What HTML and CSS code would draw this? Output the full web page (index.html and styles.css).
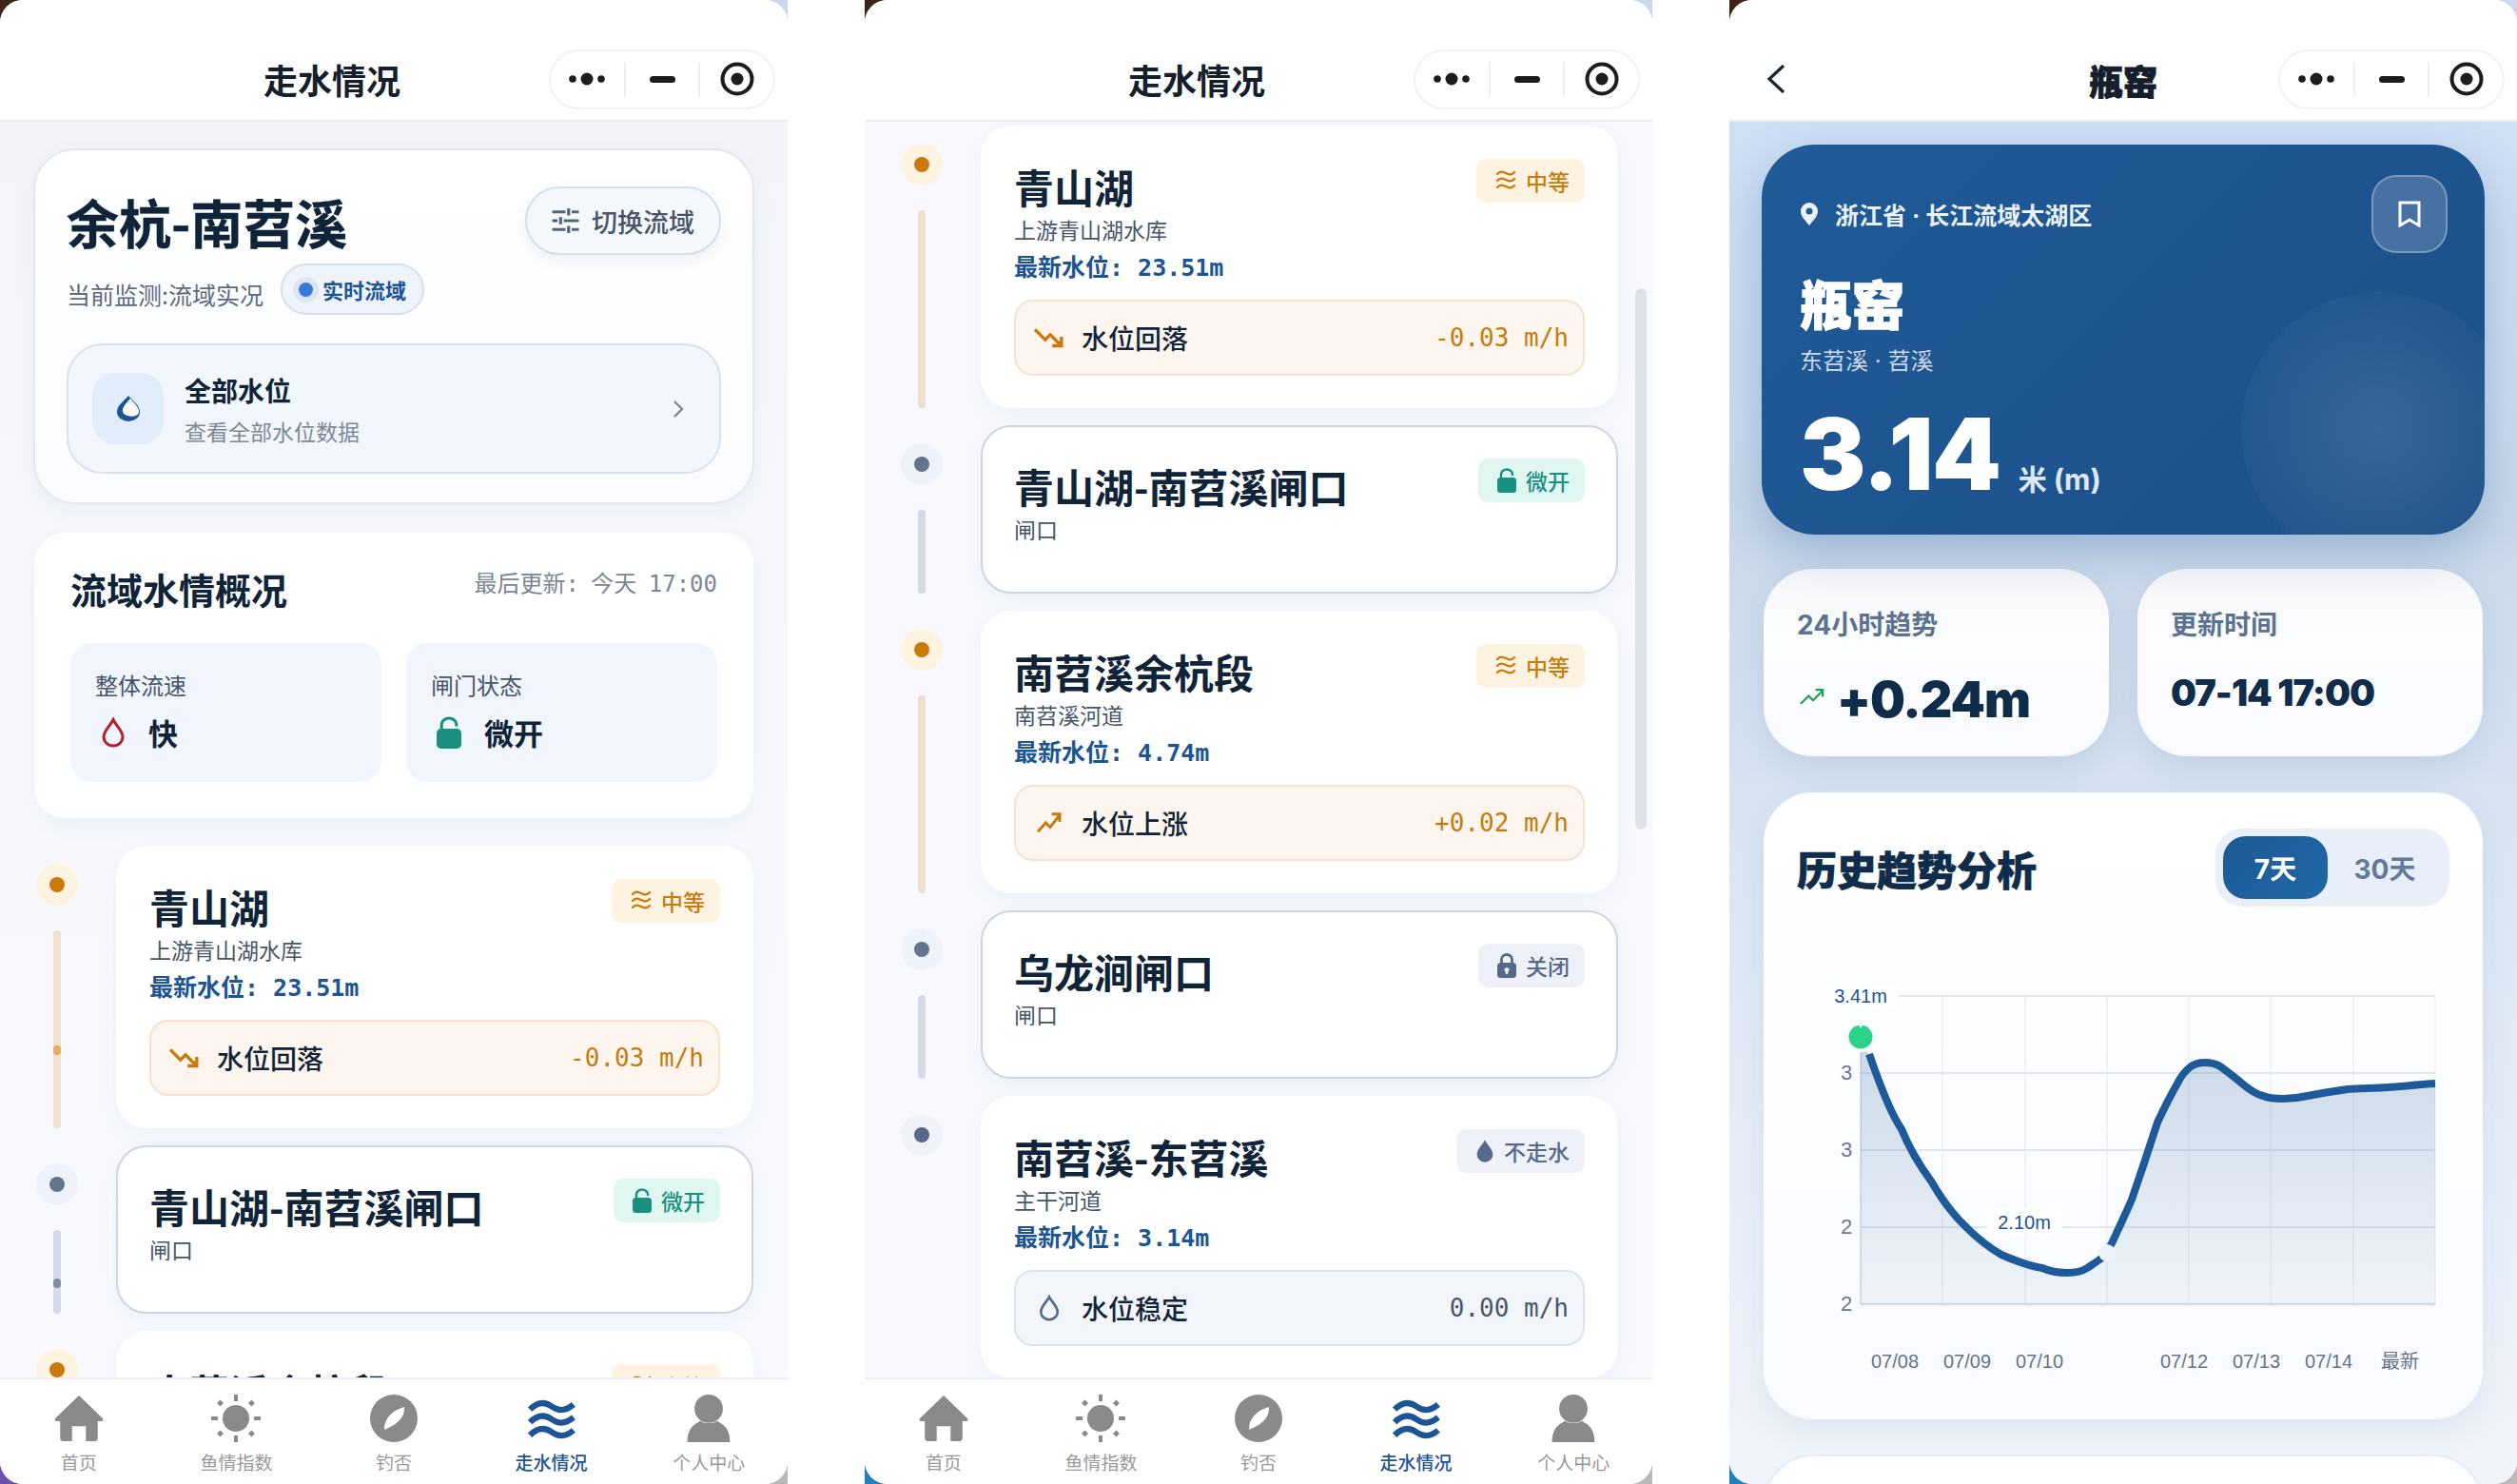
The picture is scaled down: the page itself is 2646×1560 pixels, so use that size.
FILE: index.html
```html
<!DOCTYPE html>
<html lang="zh-CN">
<head>
    <meta charset="UTF-8">
    <title>走水情况</title>
    <link rel="stylesheet" href="styles.css">
</head>
<body>
    <svg class="defs" width="0" height="0">
        <symbol id="i-dots" viewBox="0 0 38 14"><circle cx="4" cy="7" r="3.8"/><circle cx="19" cy="7" r="6.5"/><circle cx="34" cy="7" r="3.8"/></symbol>
        <symbol id="i-target" viewBox="0 0 36 36"><circle cx="18" cy="18" r="15.5" fill="none" stroke="currentColor" stroke-width="4"/><circle cx="18" cy="18" r="6.5"/></symbol>
        <symbol id="i-wave3" viewBox="0 0 22 24"><path d="M2 5c3-3 5-3 9-1s6 2 9-1M2 12c3-3 5-3 9-1s6 2 9-1M2 19c3-3 5-3 9-1s6 2 9-1" fill="none" stroke="currentColor" stroke-width="2.400" stroke-linecap="round"/></symbol>
        <symbol id="i-lock-open" viewBox="0 0 20 26"><rect x="0" y="10" width="20" height="16" rx="3.5"/><path d="M4 11V6.500a6 5 0 0 1 12 0V8" fill="none" stroke="currentColor" stroke-width="2.400"/></symbol>
        <symbol id="i-lock" viewBox="0 0 20 26"><path fill-rule="evenodd" d="M3.500 10h13a3.500 3.500 0 0 1 3.500 3.500v9a3.500 3.500 0 0 1-3.500 3.500h-13A3.500 3.500 0 0 1 0 22.500v-9A3.500 3.500 0 0 1 3.500 10zM10 15a2.500 2.500 0 0 0-1.200 4.700V22h2.400v-2.300A2.500 2.500 0 0 0 10 15z"/><path d="M4.500 11V6.500a5.500 5 0 0 1 11 0V11" fill="none" stroke="currentColor" stroke-width="2.800"/></symbol>
        <symbol id="i-drop" viewBox="0 0 24 30"><path d="M12 1C9 7 2 13 2 19.500a10 9.500 0 0 0 20 0C22 13 15 7 12 1z"/></symbol>
        <symbol id="i-drop-line" viewBox="0 0 26 32"><path d="M13 2.500C10 9 3 14 3 20.500a10 9.500 0 0 0 20 0C23 14 16 9 13 2.500z" fill="none" stroke="currentColor" stroke-width="3"/></symbol>
        <symbol id="i-down" viewBox="0 0 30 20"><path d="M1 2l10 10 5-5 11 11M27 9v9h-9" fill="none" stroke="currentColor" stroke-width="3.200"/></symbol>
        <symbol id="i-up" viewBox="0 0 28 24"><path d="M1 22L10 12l5 5L26 3M17 2h9v9" fill="none" stroke="currentColor" stroke-width="3.200"/></symbol>
        <symbol id="i-home" viewBox="0 0 50 46"><path d="M25 0l24 23c1 2 0 3-2 3h-3v17c0 2-1 3-3 3h-9V31H18v15H9c-2 0-3-1-3-3V26H3c-2 0-3-1-2-3z"/></symbol>
        <symbol id="i-sun" viewBox="0 0 52 50"><circle cx="26" cy="25" r="14"/><rect x="24" y="0" width="4" height="7"/><rect x="24" y="43" width="4" height="7"/><rect x="0" y="23" width="7" height="4"/><rect x="45" y="23" width="7" height="4"/><rect x="7" y="6.500" width="5" height="5" transform="rotate(45 9.500 9)"/><rect x="40" y="6.500" width="5" height="5" transform="rotate(45 42.500 9)"/><rect x="7" y="38.500" width="5" height="5" transform="rotate(45 9.500 41)"/><rect x="40" y="38.500" width="5" height="5" transform="rotate(45 42.500 41)"/></symbol>
        <symbol id="i-compass" viewBox="0 0 46 46"><circle cx="23" cy="23" r="23"/><path d="M33 12c1 8-4 16-19 22-1-8 5-18 19-22z" fill="#fff"/></symbol>
        <symbol id="i-waves" viewBox="0 0 50 40"><path d="M3 11C11 3 18 3 25 8s14 5 22-2M3 24c8-8 15-8 22-3s14 5 22-2M3 37c8-8 15-8 22-3s14 5 22-2" fill="none" stroke="currentColor" stroke-width="6"/></symbol>
        <symbol id="i-user" viewBox="0 0 42 47"><ellipse cx="21" cy="14" rx="14" ry="14"/><path d="M13 26c2 3 14 3 16 0 6 3 13 7 13 21H0C0 33 7 29 13 26z"/></symbol>
    </svg>

    <div class="desk">

        <!-- 走水情况 -->
        <div class="frame frame-a">
            <div class="screen">
                <div class="navbar">
                    <div class="nav-title">走水情况</div>
                    <div class="capsule">
                        <span class="cap-cell"><svg class="ic-dots"><use href="#i-dots"/></svg></span>
                        <span class="cap-cell"><i class="cap-dash"></i></span>
                        <span class="cap-cell"><svg class="ic-target"><use href="#i-target"/></svg></span>
                    </div>
                </div>
                <div class="content">
                    <div class="basin-card">
                        <div class="basin-head">
                            <div>
                                <h1 class="basin-name">余杭-南苕溪</h1>
                                <div class="basin-sub">
                                    <span class="basin-note">当前监测:流域实况</span>
                                    <span class="live-pill"><i class="live-dot"></i>实时流域</span>
                                </div>
                            </div>
                            <div class="switch-btn">
                                <svg class="ic-tune" viewBox="0 0 30 28"><path d="M0 4h15M22 4h8M0 14h6M13 14h17M0 24h15M22 24h8M18.500 0v8M9.500 10v8M18.500 20v8" fill="none" stroke="#56647a" stroke-width="3.400"/></svg>
                                切换流域
                            </div>
                        </div>
                        <div class="all-row">
                            <div class="all-icon">
                                <svg class="ic-alldrop" viewBox="0 0 24 27"><path d="M12 0C8 5 0 10 0 17a12 10 0 0 0 24 0C24 10 16 5 12 0z" fill="#1c5596"/><path d="M14 3c-2 3-9 8-8 14 2 5 14 7 17 1 1-6-6-11-9-15z" fill="#fff"/></svg>
                            </div>
                            <div class="all-text">
                                <div class="all-title">全部水位</div>
                                <div class="all-desc">查看全部水位数据</div>
                            </div>
                            <svg class="ic-chev" viewBox="0 0 12 20"><path d="M2 2l8 8-8 8" fill="none" stroke="#7b8594" stroke-width="2.400"/></svg>
                        </div>
                    </div>

                    <div class="overview">
                        <div class="overview-head">
                            <h2 class="overview-title">流域水情概况</h2>
                            <span class="overview-time">最后更新: 今天 17:00</span>
                        </div>
                        <div class="overview-grid">
                            <div class="stat">
                                <div class="stat-label">整体流速</div>
                                <div class="stat-value"><svg class="ic-stat red"><use href="#i-drop-line"/></svg>快</div>
                            </div>
                            <div class="stat">
                                <div class="stat-label">闸门状态</div>
                                <div class="stat-value"><svg class="ic-stat teal"><use href="#i-lock-open"/></svg>微开</div>
                            </div>
                        </div>
                    </div>

                    <div class="timeline">
                        <div class="tl-row">
                            <div class="tl-side amber"><i class="tl-dot"></i><i class="tl-line blip"></i></div>
                            <div class="item">
                                <div class="item-head">
                                    <div class="item-title">青山湖</div>
                                    <span class="badge amber"><svg class="ic-badge"><use href="#i-wave3"/></svg>中等</span>
                                </div>
                                <div class="item-loc">上游青山湖水库</div>
                                <div class="item-level">最新水位: 23.51m</div>
                                <div class="trend amber">
                                    <svg class="ic-trend"><use href="#i-down"/></svg>
                                    <span class="trend-name">水位回落</span>
                                    <span class="trend-val">-0.03 m/h</span>
                                </div>
                            </div>
                        </div>
                        <div class="tl-row">
                            <div class="tl-side gate"><i class="tl-dot"></i><i class="tl-line blip"></i></div>
                            <div class="item item-gate">
                                <div class="item-head">
                                    <div class="item-title">青山湖-南苕溪闸口</div>
                                    <span class="badge teal"><svg class="ic-badge ic-lock"><use href="#i-lock-open"/></svg>微开</span>
                                </div>
                                <div class="item-loc">闸口</div>
                            </div>
                        </div>
                        <div class="tl-row">
                            <div class="tl-side amber"><i class="tl-dot"></i><i class="tl-line"></i></div>
                            <div class="item">
                                <div class="item-head">
                                    <div class="item-title">南苕溪余杭段</div>
                                    <span class="badge amber"><svg class="ic-badge"><use href="#i-wave3"/></svg>中等</span>
                                </div>
                            </div>
                        </div>
                    </div>
                </div>
                <div class="tabbar">
                    <div class="tab"><svg class="ic-tab"><use href="#i-home"/></svg>首页</div>
                    <div class="tab"><svg class="ic-tab"><use href="#i-sun"/></svg>鱼情指数</div>
                    <div class="tab"><svg class="ic-tab"><use href="#i-compass"/></svg>钓否</div>
                    <div class="tab active"><svg class="ic-tab"><use href="#i-waves"/></svg>走水情况</div>
                    <div class="tab"><svg class="ic-tab"><use href="#i-user"/></svg>个人中心</div>
                </div>
            </div>
        </div>

        <!-- 走水情况，列表滚动后 -->
        <div class="frame frame-b">
            <div class="screen">
                <div class="navbar">
                    <div class="nav-title">走水情况</div>
                    <div class="capsule">
                        <span class="cap-cell"><svg class="ic-dots"><use href="#i-dots"/></svg></span>
                        <span class="cap-cell"><i class="cap-dash"></i></span>
                        <span class="cap-cell"><svg class="ic-target"><use href="#i-target"/></svg></span>
                    </div>
                </div>
                <div class="content content-scrolled">
                    <div class="timeline">
                        <div class="tl-row">
                            <div class="tl-side amber"><i class="tl-dot"></i><i class="tl-line"></i></div>
                            <div class="item">
                                <div class="item-head">
                                    <div class="item-title">青山湖</div>
                                    <span class="badge amber"><svg class="ic-badge"><use href="#i-wave3"/></svg>中等</span>
                                </div>
                                <div class="item-loc">上游青山湖水库</div>
                                <div class="item-level">最新水位: 23.51m</div>
                                <div class="trend amber">
                                    <svg class="ic-trend"><use href="#i-down"/></svg>
                                    <span class="trend-name">水位回落</span>
                                    <span class="trend-val">-0.03 m/h</span>
                                </div>
                            </div>
                        </div>
                        <div class="tl-row">
                            <div class="tl-side gate"><i class="tl-dot"></i><i class="tl-line"></i></div>
                            <div class="item item-gate">
                                <div class="item-head">
                                    <div class="item-title">青山湖-南苕溪闸口</div>
                                    <span class="badge teal"><svg class="ic-badge ic-lock"><use href="#i-lock-open"/></svg>微开</span>
                                </div>
                                <div class="item-loc">闸口</div>
                            </div>
                        </div>
                        <div class="tl-row">
                            <div class="tl-side amber"><i class="tl-dot"></i><i class="tl-line"></i></div>
                            <div class="item">
                                <div class="item-head">
                                    <div class="item-title">南苕溪余杭段</div>
                                    <span class="badge amber"><svg class="ic-badge"><use href="#i-wave3"/></svg>中等</span>
                                </div>
                                <div class="item-loc">南苕溪河道</div>
                                <div class="item-level">最新水位: 4.74m</div>
                                <div class="trend amber">
                                    <svg class="ic-trend"><use href="#i-up"/></svg>
                                    <span class="trend-name">水位上涨</span>
                                    <span class="trend-val">+0.02 m/h</span>
                                </div>
                            </div>
                        </div>
                        <div class="tl-row">
                            <div class="tl-side gate"><i class="tl-dot"></i><i class="tl-line"></i></div>
                            <div class="item item-gate">
                                <div class="item-head">
                                    <div class="item-title">乌龙涧闸口</div>
                                    <span class="badge slate"><svg class="ic-badge ic-lock"><use href="#i-lock"/></svg>关闭</span>
                                </div>
                                <div class="item-loc">闸口</div>
                            </div>
                        </div>
                        <div class="tl-row">
                            <div class="tl-side slate"><i class="tl-dot"></i></div>
                            <div class="item">
                                <div class="item-head">
                                    <div class="item-title">南苕溪-东苕溪</div>
                                    <span class="badge slate"><svg class="ic-badge ic-lock"><use href="#i-drop"/></svg>不走水</span>
                                </div>
                                <div class="item-loc">主干河道</div>
                                <div class="item-level">最新水位: 3.14m</div>
                                <div class="trend slate">
                                    <svg class="ic-trend ic-trend-drop"><use href="#i-drop-line"/></svg>
                                    <span class="trend-name">水位稳定</span>
                                    <span class="trend-val">0.00 m/h</span>
                                </div>
                            </div>
                        </div>
                    </div>
                    <i class="scrollbar"></i>
                </div>
                <div class="tabbar">
                    <div class="tab"><svg class="ic-tab"><use href="#i-home"/></svg>首页</div>
                    <div class="tab"><svg class="ic-tab"><use href="#i-sun"/></svg>鱼情指数</div>
                    <div class="tab"><svg class="ic-tab"><use href="#i-compass"/></svg>钓否</div>
                    <div class="tab active"><svg class="ic-tab"><use href="#i-waves"/></svg>走水情况</div>
                    <div class="tab"><svg class="ic-tab"><use href="#i-user"/></svg>个人中心</div>
                </div>
            </div>
        </div>

        <!-- 瓶窑详情 -->
        <div class="frame frame-b">
            <div class="screen">
                <div class="navbar navbar-detail">
                    <svg class="ic-back" viewBox="0 0 20 32"><path d="M18 2L3 16l15 14" fill="none" stroke="#1a2433" stroke-width="3.200"/></svg>
                    <div class="nav-title">瓶窑</div>
                    <div class="capsule">
                        <span class="cap-cell"><svg class="ic-dots"><use href="#i-dots"/></svg></span>
                        <span class="cap-cell"><i class="cap-dash"></i></span>
                        <span class="cap-cell"><svg class="ic-target"><use href="#i-target"/></svg></span>
                    </div>
                </div>
                <div class="content detail">
                    <div class="hero">
                        <i class="hero-glow"></i>
                        <div class="hero-top">
                            <div class="hero-place">
                                <svg class="ic-pin" viewBox="0 0 20 24"><path fill-rule="evenodd" d="M10 0a9 9 0 0 1 9 9c0 6-6 11-9 15-3-4-9-9-9-15a9 9 0 0 1 9-9zm0 5.500a3.500 3.500 0 1 0 0 7 3.500 3.500 0 0 0 0-7z" fill="#eaf1f8"/></svg>
                                浙江省 · 长江流域太湖区
                            </div>
                            <div class="hero-mark">
                                <svg class="ic-mark" viewBox="0 0 24 28"><path d="M2 2h20v24l-10-6-10 6z" fill="none" stroke="#fff" stroke-width="3"/></svg>
                            </div>
                        </div>
                        <h1 class="hero-name">瓶窑</h1>
                        <div class="hero-river">东苕溪 · 苕溪</div>
                        <div class="hero-level">
                            <span class="hero-num">3.14</span>
                            <span class="hero-unit">米 (m)</span>
                        </div>
                    </div>

                    <div class="mini-grid">
                        <div class="mini">
                            <div class="mini-label">24小时趋势</div>
                            <div class="mini-value mini-big"><svg class="ic-mini" viewBox="0 0 28 18"><path d="M1 17l9-9 5 5L26 2M18 1h8v8" fill="none" stroke="#1fa055" stroke-width="2.400"/></svg>+0.24m</div>
                        </div>
                        <div class="mini">
                            <div class="mini-label">更新时间</div>
                            <div class="mini-value">07-14 17:00</div>
                        </div>
                    </div>

                    <div class="history">
                        <div class="history-head">
                            <h2 class="history-title">历史趋势分析</h2>
                            <div class="range">
                                <span class="range-btn on">7天</span>
                                <span class="range-btn">30天</span>
                            </div>
                        </div>
                        <svg class="chart" viewBox="0 0 756 492">
                            <defs>
                                <linearGradient id="areaFill" x1="0" y1="0" x2="0" y2="1">
                                    <stop offset="0" stop-color="#1e5a96" stop-opacity=".22"/>
                                    <stop offset="1" stop-color="#1e5a96" stop-opacity=".05"/>
                                </linearGradient>
                            </defs>
                            <g stroke="#eaeff6" stroke-width="1.500">
                                <path d="M188 47v324M275 47v324M361 47v324M447 47v324M533 47v324M620 47v324M706 47v324"/>
                            </g>
                            <g stroke="#e0e7f1" stroke-width="2">
                                <path d="M142 47h564M102 128h604M102 209h604M102 290h604"/>
                            </g>
                            <path d="M102 371h604" stroke="#d3deed" stroke-width="2.500"/>
                            <path d="M102 100v271" stroke="#cdd8e8" stroke-width="1.500"/>
                            <path class="area" fill="url(#areaFill)" d="M102 100L111 108C122 140 133 170 145 187C155 212 166 228 177 243C188 262 200 278 214 291C226 303 238 312 250 319C264 325 279 331 293 333C302 337 310 338 319 338C327 338 334 337 340 333C346 329 351 326 356 322C360 316 363 312 366 307C373 292 380 277 387 261C396 235 405 208 414 180C421 165 428 151 435 139C439 131 443 126 448 122C453 118 458 117 464 117C470 117 475 118 480 121C488 127 495 132 503 139C510 145 517 150 525 152C532 155 539 155 546 155C555 155 563 154 572 152C586 149 600 147 614 145C628 144 642 144 656 143C673 142 689 140 706 139V371H102z"/>
                            <path class="curve" d="M111 108C122 140 133 170 145 187C155 212 166 228 177 243C188 262 200 278 214 291C226 303 238 312 250 319C264 325 279 331 293 333C302 337 310 338 319 338C327 338 334 337 340 333C346 329 351 326 356 322C360 316 363 312 366 307C373 292 380 277 387 261C396 235 405 208 414 180C421 165 428 151 435 139C439 131 443 126 448 122C453 118 458 117 464 117C470 117 475 118 480 121C488 127 495 132 503 139C510 145 517 150 525 152C532 155 539 155 546 155C555 155 563 154 572 152C586 149 600 147 614 145C628 144 642 144 656 143C673 142 689 140 706 139"/>
                            <circle cx="361" cy="317" r="9" fill="#eef3fb"/>
                            <circle cx="102" cy="90" r="16" fill="#fff"/>
                            <circle cx="102" cy="90" r="12.500" fill="#2bd48a"/>
                            <path d="M99 76l3 5 3-5z" fill="#fff"/>
                            <rect x="64" y="36" width="76" height="24" fill="#fff"/>
                            <text class="peak" x="102" y="54">3.41m</text>
                            <rect x="235" y="270" width="79" height="27" rx="6" fill="#fff"/>
                            <text class="peak low" x="274" y="292">2.10m</text>
                            <text class="axis-y" x="87" y="135">3</text>
                            <text class="axis-y" x="87" y="216">3</text>
                            <text class="axis-y" x="87" y="297">2</text>
                            <text class="axis-y" x="87" y="378">2</text>
                            <text class="axis-x" x="138" y="438">07/08</text>
                            <text class="axis-x" x="214" y="438">07/09</text>
                            <text class="axis-x" x="290" y="438">07/10</text>
                            <text class="axis-x" x="442" y="438">07/12</text>
                            <text class="axis-x" x="518" y="438">07/13</text>
                            <text class="axis-x" x="594" y="438">07/14</text>
                            <text class="axis-x" x="669" y="438">最新</text>
                        </svg>
                    </div>
                    <div class="next-card"></div>
                </div>
            </div>
        </div>

    </div>
</body>
</html>
```

FILE: styles.css
```css
body, html {
    margin: 0;
    padding: 0;
    background: #fff;
    font-family: "Noto Sans CJK SC", "Noto Sans", sans-serif;
    color: #0f2438;
}
.defs {
    position: absolute;
}
.desk {
    display: flex;
    gap: 81px;
    width: 2646px;
    height: 1560px;
    overflow: hidden;
}
.frame {
    width: 828px;
    height: 1560px;
    flex: none;
}
/* esquinas del fondo de escritorio */
.frame-a {
    background: conic-gradient(#cdd8ef 0 25%, #b9b9b9 0 50%, #6a4fb0 0 75%, #3d2414 0);
}
.frame-b {
    background: conic-gradient(#cdd8ef 0 25%, #b9b9b9 0 50%, #1f7fc0 0 75%, #3d2414 0);
}
.screen {
    height: 100%;
    border-radius: 24px;
    overflow: hidden;
    display: flex;
    flex-direction: column;
    background: #fff;
}

/* navbar */
.navbar {
    height: 128px;
    flex: none;
    box-sizing: border-box;
    border-bottom: 2px solid #ececf0;
    display: flex;
    align-items: center;
    padding: 40px 13px 0 0;
    position: relative;
    z-index: 3;
    background: #fff;
}
.nav-title {
    flex: 1;
    text-align: center;
    font-size: 36px;
    font-weight: 700;
    color: #141e2c;
    padding-left: 121px;
}
.navbar-detail .nav-title {
    position: absolute;
    left: 0;
    right: 0;
    top: 60px;
    padding-left: 0;
    line-height: 48px;
    font-weight: 900;
    -webkit-text-stroke: 1px #141e2c;
}
.ic-back {
    width: 20px;
    height: 32px;
    margin-left: 39px;
    margin-right: auto;
}
.capsule {
    width: 238px;
    height: 63px;
    box-sizing: border-box;
    border: 2px solid #f2f2f4;
    border-radius: 32px;
    display: flex;
    align-items: center;
    color: #1c1c1e;
    fill: currentColor;
    background: #fff;
}
.cap-cell {
    flex: 1;
    height: 37px;
    display: flex;
    align-items: center;
    justify-content: center;
    border-left: 2px solid #efefef;
}
.cap-cell:first-child {
    border-left: 0;
}
.ic-dots {
    width: 38px;
    height: 14px;
}
.cap-dash {
    display: block;
    width: 27px;
    height: 7px;
    border-radius: 4px;
    background: #1c1c1e;
}
.ic-target {
    width: 36px;
    height: 36px;
}

/* contenido */
.content {
    flex: 1;
    min-height: 0;
    overflow: hidden;
    position: relative;
    box-sizing: border-box;
    padding: 28px 36px 0;
    background: linear-gradient(#f2f4f9 0, #f5f7fc 30%, #f8faff 100%);
}
.content-scrolled {
    padding-top: 4px;
    background: #f7f9fe;
}
.scrollbar {
    position: absolute;
    right: 6px;
    top: 175px;
    width: 12px;
    height: 569px;
    border-radius: 6px;
    background: #dde1e8;
}

.basin-card {
    height: 374px;
    box-sizing: border-box;
    margin: 0 -1px;
    border: 2px solid #e1e8f2;
    border-radius: 44px;
    padding: 38px 33px 0;
    background: linear-gradient(#fff, #fafcff);
    box-shadow: 0 8px 24px rgba(40, 70, 120, .05);
}
.basin-head {
    display: flex;
    justify-content: space-between;
    align-items: flex-start;
}
.basin-name {
    margin: 0;
    font-size: 55px;
    line-height: 72px;
    font-weight: 700;
    color: #0f2438;
    -webkit-text-stroke: .4px #0f2438;
}
.basin-sub {
    display: flex;
    align-items: center;
    gap: 18px;
    margin-top: 9px;
}
.basin-note {
    font-size: 25px;
    color: #5d6b7e;
    padding-top: 10px;
}
.live-pill {
    height: 54px;
    box-sizing: border-box;
    padding: 0 17px 0 13px;
    display: flex;
    align-items: center;
    gap: 10px;
    border: 2px solid #d6dfec;
    border-radius: 27px;
    background: #eef3fc;
    font-size: 22px;
    font-weight: 700;
    color: #1c5596;
}
.live-dot {
    width: 15px;
    height: 15px;
    border-radius: 50%;
    background: #3a78d8;
    box-shadow: 0 0 0 6px #dce6f6;
    margin-left: 4px;
}
.switch-btn {
    width: 206px;
    height: 72px;
    box-sizing: border-box;
    border: 2px solid #d6dfec;
    border-radius: 36px;
    background: #f5f8fd;
    box-shadow: 0 6px 16px rgba(40, 70, 120, .08);
    display: flex;
    align-items: center;
    justify-content: center;
    gap: 13px;
    font-size: 27px;
    font-weight: 500;
    color: #475569;
}
.ic-tune {
    width: 29px;
    height: 26px;
}
.all-row {
    height: 137px;
    box-sizing: border-box;
    margin-top: 30px;
    border: 2px solid #d8e1ed;
    border-radius: 38px;
    background: #f2f7fe;
    display: flex;
    align-items: center;
    padding: 0 37px 0 25px;
}
.all-icon {
    width: 75px;
    height: 75px;
    border-radius: 24px;
    background: #e2edfb;
    display: flex;
    align-items: center;
    justify-content: center;
    margin-right: 22px;
}
.ic-alldrop {
    width: 24px;
    height: 27px;
}
.all-text {
    flex: 1;
}
.all-title {
    font-size: 28px;
    font-weight: 700;
    line-height: 40px;
    color: #0f2438;
}
.all-desc {
    font-size: 23px;
    line-height: 34px;
    margin-top: 6px;
    color: #7d8899;
}
.ic-chev {
    width: 12px;
    height: 20px;
}

.overview {
    margin-top: 30px;
    height: 300px;
    box-sizing: border-box;
    padding: 33px 38px 0;
    border-radius: 32px;
    background: #fff;
    box-shadow: 0 8px 24px rgba(40, 70, 120, .05);
}
.overview-head {
    display: flex;
    justify-content: space-between;
    align-items: flex-start;
}
.overview-title {
    margin: 0;
    font-size: 38px;
    line-height: 52px;
    font-weight: 700;
    color: #0f2438;
}
.overview-time {
    font-family: "DejaVu Sans Mono", "Noto Sans CJK SC", monospace;
    font-size: 24px;
    line-height: 42px;
    word-spacing: -2px;
    color: #7b8594;
}
.overview-grid {
    display: grid;
    grid-template-columns: 1fr 1fr;
    gap: 26px;
    margin-top: 31px;
}
.stat {
    height: 146px;
    box-sizing: border-box;
    padding: 26px 26px 0;
    border-radius: 22px;
    background: #f1f5fe;
}
.stat-label {
    font-size: 24px;
    line-height: 36px;
    color: #475569;
}
.stat-value {
    display: flex;
    align-items: center;
    font-size: 31px;
    font-weight: 700;
    line-height: 44px;
    margin-top: 10px;
    color: #0f2438;
}
.ic-stat {
    width: 26px;
    height: 32px;
    margin: 0 24px 0 6px;
    fill: currentColor;
}
.ic-stat.red {
    color: #b81d2a;
}
.ic-stat.teal {
    color: #1a9080;
    height: 36px;
}

/* timeline */
.timeline {
    display: flex;
    flex-direction: column;
    gap: 18px;
    margin-top: 29px;
}
.content-scrolled .timeline {
    margin-top: 0;
}
.tl-row {
    display: flex;
    align-items: stretch;
    margin-left: 2px;
}
.tl-side {
    width: 44px;
    flex: none;
    margin-right: 40px;
    padding-top: 19px;
    display: flex;
    flex-direction: column;
    align-items: center;
    gap: 26px;
}
.tl-dot {
    width: 44px;
    height: 44px;
    border-radius: 50%;
    display: flex;
    flex: none;
    align-items: center;
    justify-content: center;
    background: #fef3e0;
    position: relative;
}
.tl-dot::after {
    content: "";
    width: 16px;
    height: 16px;
    border-radius: 50%;
    background: #c97a0a;
}
.tl-line {
    flex: 1;
    width: 8px;
    border-radius: 4px;
    background: #efe0cf;
    position: relative;
}
.blip::after {
    content: "";
    position: absolute;
    left: 0;
    top: 58%;
    width: 8px;
    height: 10px;
    border-radius: 4px;
    background: #e8aa60;
}
.tl-side.gate .tl-dot {
    background: #eef2fb;
}
.tl-side.gate .tl-dot::after {
    background: #64748b;
}
.tl-side.gate .tl-line {
    background: #d4dae7;
}
.tl-side.gate .blip::after {
    background: #7f8ca4;
}
.tl-side.slate .tl-dot {
    background: #eff2f7;
}
.tl-side.slate .tl-dot::after {
    background: #56698a;
}
.item {
    flex: 1;
    min-width: 0;
    box-sizing: border-box;
    height: 297px;
    padding: 36px 35px 0;
    border-radius: 32px;
    background: #fff;
    box-shadow: 0 8px 24px rgba(40, 70, 120, .05);
}
.item-gate {
    height: 177px;
    padding: 34px 33px 0;
    border: 2px solid #cfd5e2;
}
.item-head {
    display: flex;
    justify-content: space-between;
    align-items: flex-start;
}
.item-title {
    font-size: 42px;
    font-weight: 700;
    line-height: 56px;
    color: #0f2438;
}
.item-loc {
    font-size: 23px;
    line-height: 28px;
    margin-top: 3px;
    color: #475569;
}
.item-level {
    font-family: "DejaVu Sans Mono", "Noto Sans CJK SC", monospace;
    font-size: 25px;
    font-weight: 700;
    line-height: 36px;
    margin-top: 9px;
    color: #1c5596;
}
.badge {
    height: 46px;
    box-sizing: border-box;
    margin-top: -1px;
    padding: 0 16px 0 20px;
    display: flex;
    align-items: center;
    gap: 10px;
    border-radius: 10px;
    font-size: 23px;
    font-weight: 500;
    fill: currentColor;
}
.badge.amber {
    background: #fef3e0;
    color: #c97a0a;
}
.badge.teal {
    background: #e0f6f1;
    color: #1a9080;
}
.badge.slate {
    background: #eef2f8;
    color: #56698a;
}
.ic-badge {
    width: 22px;
    height: 24px;
}
.ic-lock {
    width: 20px;
    height: 26px;
}
.trend {
    height: 80px;
    box-sizing: border-box;
    margin-top: 15px;
    padding: 0 15px 0 19px;
    display: flex;
    align-items: center;
    border: 2px solid #f6e3cf;
    border-radius: 20px;
    background: #fdf5ee;
}
.trend.slate {
    border-color: #dde3ec;
    background: #f2f5f9;
}
.trend-name {
    flex: 1;
    font-size: 28px;
    font-weight: 500;
    margin-left: 18px;
    color: #0f2438;
}
.trend-val {
    font-family: "DejaVu Sans Mono", monospace;
    font-size: 26px;
    color: #c97a0a;
}
.trend.slate .trend-val {
    color: #475569;
}
.ic-trend {
    width: 32px;
    height: 22px;
    color: #c97a0a;
}
.ic-trend-drop {
    height: 28px;
    color: #56698a;
}

/* tabbar */
.tabbar {
    height: 112px;
    flex: none;
    box-sizing: border-box;
    border-top: 2px solid #eeeef2;
    background: #fff;
    display: flex;
    position: relative;
    z-index: 3;
}
.tab {
    flex: 1;
    display: flex;
    flex-direction: column;
    align-items: center;
    padding-top: 16px;
    font-size: 19px;
    line-height: 26px;
    color: #999;
    fill: #8a8a8a;
}
.tab.active {
    color: #1c5596;
    fill: #1c5596;
    font-weight: 500;
}
.ic-tab {
    width: 52px;
    height: 50px;
    margin-bottom: 8px;
}

/* detalle */
.detail {
    padding: 24px 36px 0;
    font-family: Inter, "Noto Sans CJK SC", sans-serif;
    background: linear-gradient(#cfe0f5 0, #c9d8ea 30%, #dbe6f3 55%, #f1f5fb 100%);
}
.hero {
    height: 410px;
    box-sizing: border-box;
    margin: 0 -2px;
    padding: 32px 39px 0 40px;
    border-radius: 56px;
    position: relative;
    overflow: hidden;
    color: #fff;
    background: linear-gradient(135deg, #1f5b98, #1c4f88);
    box-shadow: 0 16px 48px rgba(28, 80, 136, .28);
}
.hero-glow {
    position: absolute;
    left: 504px;
    top: 155px;
    width: 290px;
    height: 290px;
    border-radius: 50%;
    background: radial-gradient(rgba(255, 255, 255, .12), rgba(255, 255, 255, .03) 68%, rgba(255, 255, 255, .01));
}
.hero-top {
    display: flex;
    justify-content: space-between;
    align-items: center;
    position: relative;
}
.hero-place {
    display: flex;
    align-items: center;
    gap: 17px;
    font-size: 25px;
    font-weight: 700;
    color: #eaf1f8;
}
.ic-pin {
    width: 20px;
    height: 24px;
}
.hero-mark {
    width: 80px;
    height: 82px;
    box-sizing: border-box;
    border: 2px solid rgba(255, 255, 255, .28);
    border-radius: 26px;
    background: rgba(255, 255, 255, .18);
    display: flex;
    align-items: center;
    justify-content: center;
}
.ic-mark {
    width: 24px;
    height: 28px;
}
.hero-name {
    margin: 17px 0 0;
    font-size: 55px;
    line-height: 76px;
    font-weight: 900;
    -webkit-text-stroke: 1.5px #fff;
}
.hero-river {
    font-size: 24px;
    line-height: 30px;
    margin-top: 6px;
    color: rgba(255, 255, 255, .78);
}
.hero-level {
    display: flex;
    align-items: baseline;
    gap: 19px;
    margin-top: 27px;
    position: relative;
}
.hero-num {
    font-size: 104px;
    font-weight: 900;
    line-height: 110px;
    letter-spacing: -1.500px;
}
.hero-unit {
    font-size: 30px;
    font-weight: 700;
    color: #dfe8f2;
}
.mini-grid {
    display: grid;
    grid-template-columns: 1fr 1fr;
    gap: 30px;
    margin-top: 36px;
}
.mini {
    height: 197px;
    box-sizing: border-box;
    padding: 39px 35px 0;
    border-radius: 52px;
    background: linear-gradient(#f5f6f8, #fcfdff 35%, #f9fbff);
    box-shadow: 0 14px 36px rgba(40, 80, 130, .1);
}
.mini-label {
    font-size: 28px;
    font-weight: 700;
    line-height: 40px;
    color: #5b7290;
}
.mini-value {
    font-size: 38px;
    font-weight: 900;
    line-height: 44px;
    margin-top: 29px;
    letter-spacing: -1px;
    color: #0f2d4a;
}
.mini-big {
    display: flex;
    align-items: center;
    font-size: 52px;
    line-height: 60px;
}
.ic-mini {
    width: 26px;
    height: 17px;
    margin: -8px 13px 0 3px;
}
.history {
    height: 659px;
    box-sizing: border-box;
    margin-top: 38px;
    padding: 38px 35px 0;
    border-radius: 52px;
    background: linear-gradient(#fff, #f9fbff);
    box-shadow: 0 14px 36px rgba(40, 80, 130, .08);
}
.history-head {
    display: flex;
    justify-content: space-between;
    align-items: center;
}
.history-title {
    margin: 0;
    font-size: 42px;
    font-weight: 900;
    -webkit-text-stroke: .6px #0f2d4a;
    color: #0f2d4a;
}
.range {
    width: 246px;
    height: 82px;
    box-sizing: border-box;
    padding: 8px;
    display: flex;
    border-radius: 28px;
    background: #e8eff8;
}
.range-btn {
    flex: 1;
    display: flex;
    align-items: center;
    justify-content: center;
    font-size: 28px;
    font-weight: 700;
    color: #64799a;
}
.range-btn.on {
    flex: none;
    width: 110px;
    border-radius: 24px;
    color: #fff;
    background: linear-gradient(135deg, #1c5a94, #2068a8);
}
.chart {
    display: block;
    width: 756px;
    height: 492px;
    margin: 47px -35px 0;
}
.curve {
    fill: none;
    stroke: #1e5a9a;
    stroke-width: 8;
}
.chart text {
    font-family: "Liberation Sans", "Noto Sans CJK SC", sans-serif;
    text-anchor: middle;
}
.peak {
    font-size: 20px;
    fill: #1c5596;
}
.axis-y {
    font-size: 22px;
    fill: #6b7a8c;
}
.axis-x {
    font-size: 20px;
    fill: #64748b;
}
.next-card {
    height: 120px;
    margin-top: 37px;
    border-radius: 52px 52px 0 0;
    background: #fff;
    border: 2px solid #e4ecf6;
    box-sizing: border-box;
}
```
